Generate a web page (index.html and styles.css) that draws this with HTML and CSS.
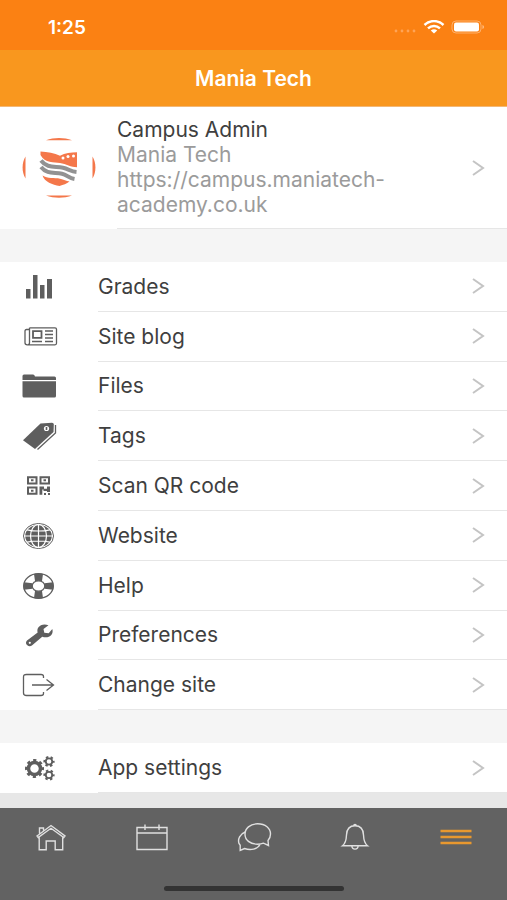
FILE: index.html
```html
<!DOCTYPE html>
<html lang="en">
<head>
  <meta charset="UTF-8" />
  <meta name="viewport" content="width=device-width, initial-scale=1" />
  <title>Mania Tech</title>
  <link rel="stylesheet" href="styles.css">
</head>
<body>
  <!-- shared chevron -->
  <svg class="defs" aria-hidden="true">
    <symbol id="chevron" viewBox="0 0 14 18">
      <path d="M2 2l10 7-10 7" fill="none" stroke="#c4c4c4" stroke-width="2" />
    </symbol>
  </svg>

  <div class="status-bar">
    <span class="clock">1:25</span>
    <div class="status-icons">
      <svg width="24" height="6" viewBox="0 0 24 6" fill="#ffa457">
        <circle cx="3" cy="3" r="1.4" /><circle cx="9" cy="3" r="1.4" /><circle cx="15" cy="3" r="1.4" /><circle cx="21" cy="3" r="1.4" />
      </svg>
      <svg class="wifi" width="22" height="14" viewBox="0 0 22 14" fill="none" stroke="#fff" stroke-width="2.5">
        <path d="M1.500 5C7-.2 15-.2 20.500 5" />
        <path d="M5 8.300c3.500-3.200 8.500-3.200 12 0" />
        <path d="M7.800 10.600c2-1.700 4.400-1.700 6.400 0L11 13.600z" fill="#fff" stroke="none" />
      </svg>
      <svg width="34" height="14" viewBox="0 0 34 14">
        <rect x="1" y="1" width="29" height="12" rx="4" fill="none" stroke="#ffb06b" />
        <rect x="3" y="2.500" width="25" height="9" rx="2" fill="#fff" />
        <path d="M31.500 5c2 .7 2 3.300 0 4z" fill="#ffc089" />
      </svg>
    </div>
  </div>

  <header class="header">
    <h1>Mania Tech</h1>
  </header>

  <main class="content">
    <a class="profile" href="#profile">
      <svg class="avatar" width="76" height="62" viewBox="0 0 76 62">
        <g fill="#f4774a">
          <path d="M25 3.200C33 .2 43 .2 51 3.200z" />
          <path d="M25 58.500c8 3 18 3 26 0z" />
          <path d="M4.500 19.500C.6 26 .6 35 4.500 41.500z" />
          <path d="M71.500 19.500c3.900 6.500 3.900 15.500 0 22z" />
          <path d="M19.500 14.500c7 .5 14 1.500 19.500 4.300 5-3 11-3.600 17-3.600v15c-6 0-11-3.200-17-4.200s-15 .5-19.500-8z" />
          <path d="M21.500 38.500c5 3.500 12 2 17.500 3.200 4 1 6 2 9.500 2.800-3 2.500-6 3.200-10 4.500-7-1.500-15-4-17-10.500z" />
        </g>
        <g fill="none" stroke="#929292" stroke-width="4">
          <path d="M20 23.500c6 8 14 5.500 22 7.200 5.500 1.300 8 3.800 13.500 4.300" />
          <path d="M20 30c6 7.500 13 5 21 6.700 5 1.300 7 4.300 12.500 5.300" />
        </g>
        <g fill="#fff">
          <circle cx="42" cy="21" r="1.500" /><circle cx="47" cy="19.500" r="1.500" /><circle cx="52.500" cy="19" r="1.500" />
        </g>
      </svg>
      <div class="profile-body">
        <div class="profile-text">
          <h2>Campus Admin</h2>
          <p>Mania Tech</p>
          <p>https://campus.maniatech-academy.co.uk</p>
        </div>
        <svg class="chevron"><use href="#chevron" /></svg>
      </div>
    </a>

    <nav class="menu menu-main" aria-label="Menu">
      <a class="item" href="#grades">
        <svg class="icon" viewBox="0 0 40 32">
          <path d="M7 18h4.500v9.500H7zM14 4h4.500v23.500H14zM21 14h4.500v13.500H21zM28 8h5v19.500h-5z" />
        </svg>
        <span class="label">Grades<svg class="chevron"><use href="#chevron" /></svg></span>
      </a>
      <a class="item" href="#blog">
        <svg class="icon line" viewBox="0 0 40 32">
          <path d="M10.500 6.800H36q1.500 0 1.500 1.500v14q0 1.500-1.500 1.500H8.300q-2.300 0-2.300-2V10q0-1.500 1.500-1.500h3M10.500 6.800v15q0 2-1.800 2" />
          <path d="M14 10.200h8.500v6.600H14z" stroke-width="1.800" />
          <path d="M26 10h8M26 13.500h8M26 17h8M26 20.500h8M13 20.500h10" />
        </svg>
        <span class="label">Site blog<svg class="chevron"><use href="#chevron" /></svg></span>
      </a>
      <a class="item" href="#files">
        <svg class="icon" viewBox="0 0 40 32">
          <path d="M3.500 10V6q0-1.500 1.500-1.500h9q1.500 0 2 2h19.500q1.500 0 1.500 1.500v2zM3.500 11.200H37V26q0 1.500-1.500 1.500H5q-1.500 0-1.500-1.500z" />
        </svg>
        <span class="label">Files<svg class="chevron"><use href="#chevron" /></svg></span>
      </a>
      <a class="item" href="#tags">
        <svg class="icon" viewBox="0 0 40 32">
          <path d="M21.500 3.500L33 2.800q1.800 0 1.800 1.600L34.500 12 16 29 4 20.200z" />
          <path d="M36.500 5v8L18.500 29.500" fill="none" stroke="#5e5e5e" stroke-width="1.300" />
          <circle cx="27.500" cy="8.500" r="2.600" fill="#fff" />
          <path d="M26.700 7h1.600v3h-1.600z" />
        </svg>
        <span class="label">Tags<svg class="chevron"><use href="#chevron" /></svg></span>
      </a>
      <a class="item" href="#scan">
        <svg class="icon" viewBox="0 0 40 32">
          <path d="M9 7.200h8.500v6.300H9zM21.500 7.200H30v6.300h-8.500zM9 17.500h8.500v6.300H9z" fill="none" stroke="#5e5e5e" stroke-width="2" />
          <path d="M12 9.300h2.500v2H12zM24.500 9.300H27v2h-2.500zM12 19.700h2.500v2H12zM20.500 16.500H25v2.200h3v-2.200h3v5.500h-3v-1h-3.500v-1.500h-1.200v5.300h-2.800zM25 23h2v2h-2zM29 23h2v2h-2z" />
        </svg>
        <span class="label">Scan QR code<svg class="chevron"><use href="#chevron" /></svg></span>
      </a>
      <a class="item" href="#website">
        <svg class="icon" viewBox="0 0 40 32">
          <ellipse cx="19.500" cy="16" rx="15" ry="12.500" fill="#fff" stroke="#5e5e5e" />
          <ellipse cx="19.500" cy="16" rx="13.300" ry="11" />
          <g fill="none" stroke="#fff" stroke-width="1.200">
            <ellipse cx="19.500" cy="16" rx="8" ry="11.500" />
            <path d="M19.500 4v24M5 16h29M8 9.800q11.500 2.400 23 0M8 22.200q11.500-2.400 23 0" />
          </g>
        </svg>
        <span class="label">Website<svg class="chevron"><use href="#chevron" /></svg></span>
      </a>
      <a class="item" href="#help">
        <svg class="icon" viewBox="0 0 40 32">
          <ellipse cx="19.500" cy="16" rx="14.800" ry="12.300" fill="#fff" stroke="#5e5e5e" stroke-width="1.300" />
          <path d="M15 4q4.500-1.500 9 0l-1 7h-7zM15 28q4.500 1.500 9 0l-1-7h-7zM5 12.300q-1.500 3.700 0 7.400l8.500-1v-5.400zM34 12.300q1.500 3.700 0 7.400l-8.500-1v-5.400z" />
          <ellipse cx="19.500" cy="16" rx="6.300" ry="5.200" fill="#fff" stroke="#5e5e5e" stroke-width="1.300" />
        </svg>
        <span class="label">Help<svg class="chevron"><use href="#chevron" /></svg></span>
      </a>
      <a class="item" href="#preferences">
        <svg class="icon" viewBox="0 0 40 32">
          <path d="M8 21.500l11-8.200 4.500 4.300L13.200 26.300q-2.500 1.800-4.900 0-2.500-2.200-.3-4.800z" />
          <path d="M19 14.300C16.500 9 22 3.500 29.500 6.300l-5 3.700.8 3.700 4.400.6 3.600-4.300c1.800 5.500-3.500 10-10 7.800z" />
          <circle cx="10.800" cy="23.800" r="1.100" fill="#fff" />
        </svg>
        <span class="label">Preferences<svg class="chevron"><use href="#chevron" /></svg></span>
      </a>
      <a class="item" href="#change-site">
        <svg class="icon line" viewBox="0 0 40 32">
          <path d="M24.500 9V7.500q0-2-2.500-2H7.500q-3 0-3 2.500v16q0 2.500 3 2.500H22q2.500 0 2.500-2V23M13 16h21.500M27.500 10.500l7 5.500-7 5.500" />
        </svg>
        <span class="label">Change site<svg class="chevron"><use href="#chevron" /></svg></span>
      </a>
    </nav>

    <nav class="menu" aria-label="App">
      <a class="item" href="#settings">
        <svg class="icon" viewBox="0 0 40 32">
          <g fill="none" stroke="#5e5e5e">
            <circle cx="15.500" cy="16.500" r="6" stroke-width="3.500" />
            <circle cx="15.500" cy="16.500" r="8" stroke-width="3" stroke-dasharray="3.140 3.140" stroke-dashoffset="1.570" />
            <circle cx="30" cy="9.500" r="3.200" stroke-width="1.800" />
            <circle cx="30" cy="9.500" r="4.600" stroke-width="2" stroke-dasharray="2.400 2.400" stroke-dashoffset="1.200" />
            <circle cx="30" cy="23" r="3.200" stroke-width="1.800" />
            <circle cx="30" cy="23" r="4.600" stroke-width="2" stroke-dasharray="2.400 2.400" stroke-dashoffset="1.200" />
          </g>
        </svg>
        <span class="label">App settings<svg class="chevron"><use href="#chevron" /></svg></span>
      </a>
    </nav>
  </main>

  <footer class="footer">
    <nav class="tabs" aria-label="Tabs">
      <a class="tab" href="#home" aria-label="Home">
        <svg viewBox="0 0 36 32">
          <path d="M4 15L18 4.500 32 15l-1.200 1.500L18 7.300 5.200 16.500zM6.200 16.500v12.300h7V20h9v8.800h7.500V16.500M6.500 12.500V7h4v2.500" />
        </svg>
      </a>
      <a class="tab" href="#calendar" aria-label="Calendar">
        <svg viewBox="0 0 36 32">
          <path d="M3 6.500h30v22H3zM3 12h30M11 3.500V9M25 3.500V9" />
        </svg>
      </a>
      <a class="tab" href="#messages" aria-label="Messages">
        <svg viewBox="0 0 36 32">
          <path d="M21.500 2.800c8 0 13 4.500 13 10.200 0 2.700-1 4.800-2.500 6.500l.5 5-5-2.300c-2 .8-4 1-6 1-7.500 0-12.500-4.300-12.500-10S14 2.800 21.500 2.800z" />
          <path d="M9.300 11C4 13 1.500 18 3 22.500l1.200 1.800V29.500l4.300-2c6 2.200 13 .8 15.500-4" />
        </svg>
      </a>
      <a class="tab" href="#notifications" aria-label="Notifications">
        <svg viewBox="0 0 36 32">
          <path d="M18 4.800c-6 0-8.300 4-8.500 9.200-.2 5-1 8.500-4 10.700h25c-3-2.200-3.800-5.700-4-10.700-.2-5.200-2.500-9.200-8.500-9.200zM14.800 24.700c.3 4.600 6.100 4.600 6.400 0M16.800 4.500c0-1.500 2.400-1.500 2.400 0" />
        </svg>
      </a>
      <a class="tab active" href="#more" aria-label="More">
        <svg viewBox="0 0 36 32">
          <path d="M2.500 10h31M2.500 16h31M2.500 22h31" />
        </svg>
      </a>
    </nav>
    <div class="home-indicator"></div>
  </footer>
</body>
</html>
```
FILE: styles.css
```css
:root {
  --status: #fb8113;
  --accent: #f9971e;
  --bg: #f5f5f5;
  --text: #3f3f3f;
  --muted: #9b9b9b;
  --icon: #5e5e5e;
  --line: #e6e6e6;
  --bar: #626262;
}

* {
  box-sizing: border-box;
  margin: 0;
  padding: 0;
}

body {
  display: flex;
  flex-direction: column;
  min-height: 100vh;
  background-color: var(--bg);
  color: var(--text);
  font-family: Inter, "Liberation Sans", sans-serif;
  font-size: 21px;
}

a {
  color: inherit;
  text-decoration: none;
}

.defs {
  position: absolute;
  width: 0;
  height: 0;
}

.status-bar {
  display: flex;
  justify-content: space-between;
  align-items: center;
  height: 50px;
  padding: 4px 22px 0 48px;
  background-color: var(--status);
  color: #fff;
}

.clock {
  font-size: 19px;
  font-weight: 600;
}

.status-icons {
  display: flex;
  align-items: center;
  gap: 6px;
}

.status-icons svg:first-child {
  align-self: flex-end;
}

.header {
  display: flex;
  justify-content: center;
  align-items: center;
  height: 57px;
  background-color: var(--accent);
  border-bottom: 1px solid #f3b877;
  color: #fff;
}

.header h1 {
  font-size: 21px;
  font-weight: 600;
}

.content {
  flex: 1;
  display: flex;
  flex-direction: column;
  padding-bottom: 15px;
  background: linear-gradient(to top, #e7e7e7 15px, transparent 15px);
}

.profile {
  display: flex;
  align-items: center;
  padding-left: 21px;
  background-color: #fff;
}

.avatar {
  flex-shrink: 0;
}

.profile-body {
  flex: 1;
  display: flex;
  align-items: center;
  justify-content: space-between;
  margin-left: 20px;
  padding: 11px 22px 11px 0;
  border-bottom: 1px solid var(--line);
}

.profile-text {
  line-height: 25px;
  color: var(--muted);
}

.profile-text h2 {
  font-size: 21px;
  font-weight: 400;
  line-height: 24px;
  color: var(--text);
}

.chevron {
  flex-shrink: 0;
  width: 14px;
  height: 18px;
}

.menu {
  flex: 1;
  display: flex;
  flex-direction: column;
  margin-top: 33px;
  background-color: #fff;
}

/* nine rows against the single row of the second menu */
.menu-main {
  flex: 9;
}

.item {
  flex: 1;
  display: flex;
  align-items: center;
  min-height: 44px;
  padding-left: 19px;
}

.icon {
  flex-shrink: 0;
  width: 40px;
  height: 32px;
  fill: var(--icon);
}

.icon.line {
  fill: none;
  stroke: var(--icon);
  stroke-width: 1.3;
}

.label {
  flex: 1;
  align-self: stretch;
  display: flex;
  align-items: center;
  justify-content: space-between;
  margin-left: 39px;
  padding-right: 22px;
  border-bottom: 1px solid var(--line);
}

.footer {
  height: 92px;
  padding-top: 13px;
  background-color: var(--bar);
}

.tabs {
  display: flex;
}

.tab {
  flex: 1;
  display: flex;
  justify-content: center;
}

.tab svg {
  width: 36px;
  height: 32px;
  fill: none;
  stroke: #e0e0e0;
  stroke-width: 1.4;
}

.tab.active svg {
  stroke: #e8982f;
  stroke-width: 2.4;
}

.home-indicator {
  width: 180px;
  height: 5px;
  margin: 33px auto 0;
  border-radius: 3px;
  background-color: #333;
}
```
